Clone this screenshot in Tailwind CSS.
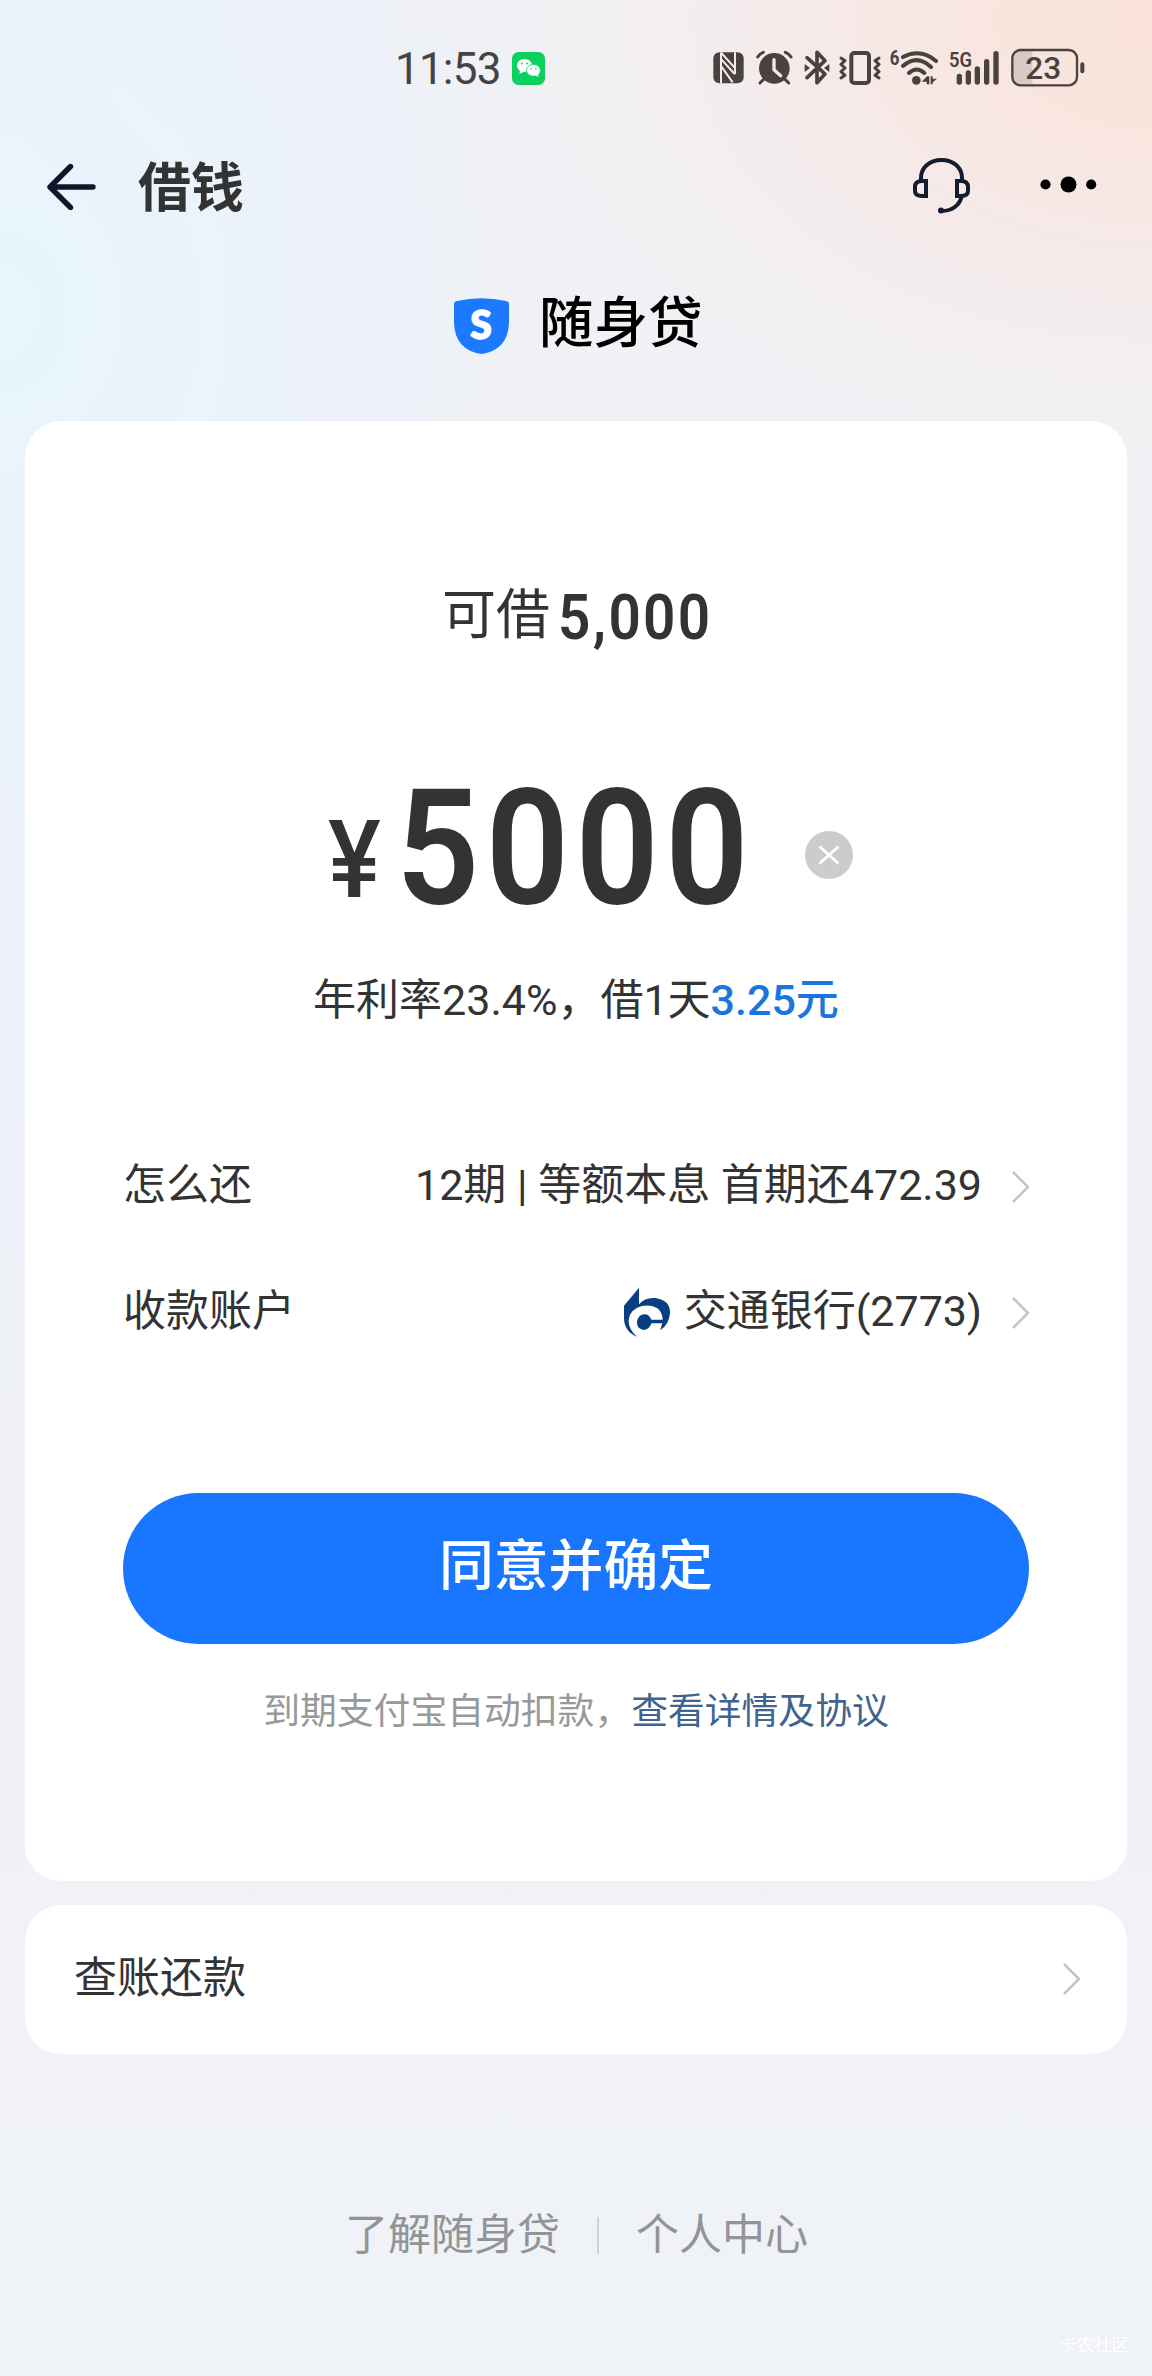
<!DOCTYPE html>
<html lang="zh-CN">
<head>
<meta charset="utf-8">
<title>借钱</title>
<script src="https://cdn.jsdelivr.net/npm/@tailwindcss/browser@4"></script>
</head>
<body class="bg-[#eff2f6]">
<div class="relative flex h-[2376px] w-[1152px] flex-col overflow-hidden bg-[radial-gradient(ellipse_660px_460px_at_1152px_20px,#f9e2d9_0%,#f8e6e0_30%,#f6e9e8b0_60%,#f4ecec40_85%,#f4ecec00_100%),radial-gradient(ellipse_420px_480px_at_0px_310px,#e8f5fd_0%,#e9f4fdb0_35%,#ebf2fb50_70%,#ebf2fb00_100%),radial-gradient(ellipse_560px_1100px_at_0px_300px,#eaf3fc_0%,#ebf2fb90_60%,#eff1f600_100%),linear-gradient(to_bottom,#f1f1f5_0px,#eff1f6_1000px,#eff2f6_2376px)] font-[Roboto,'Noto_Sans_CJK_SC',sans-serif] text-[#333]">

  <!-- status bar -->
  <div class="flex h-[134px] shrink-0 items-center pr-[67px] pl-[395px]">
    <span class="w-[117px] pt-[4px] text-[44px] leading-[44px] tracking-[-0.8px] text-[#444]">11:53</span>
    <svg class="mt-[3px] h-[33px] w-[33px]" viewBox="0 0 33 33"><rect width="33" height="33" rx="6.5" fill="#0bd15f"/><g fill="#fff"><ellipse cx="12.5" cy="13.5" rx="7.5" ry="6.6"/><path d="M8 18l-.5 4 4-2z"/><ellipse cx="21.5" cy="18.3" rx="7" ry="6" stroke="#0bd15f" stroke-width=".8"/><path d="M23 23l3.5 2-.5-3.500z"/></g><g fill="#0bd15f"><circle cx="10" cy="11.500" r=".9"/><circle cx="15" cy="11.500" r=".9"/><circle cx="19.200" cy="16.800" r=".8"/><circle cx="23.800" cy="16.800" r=".8"/></g></svg>
    <div class="ml-auto flex items-center text-[#4a423f]">
      <svg class="h-[40px] w-[31px]" viewBox="42 50 93 120"><rect x="43" y="66" width="91" height="93" rx="18" fill="currentColor"/><path d="M66 66v93M67 68l40 44M67 87l40 44M67 108l34 48M108 66v66" fill="none" stroke="#f3eaeb" stroke-width="6"/></svg>
      <svg class="ml-[12px] h-[40px] w-[37px]" viewBox="170 50 111 120"><circle cx="225" cy="114" r="46" fill="currentColor"/><path d="M175 80q6-10 17-14M275 80q-6-10-17-14M192 148l-10 10M258 148l10 10" fill="none" stroke="currentColor" stroke-width="9" stroke-linecap="round"/><path d="M224 88v30l20 18" fill="none" stroke="#f4eaea" stroke-width="10" stroke-linecap="round" stroke-linejoin="round"/></svg>
      <svg class="ml-[11px] h-[40px] w-[26px]" viewBox="311 50 78 120"><path d="M320 82l54 49-24 26V66l24 25-54 51" fill="none" stroke="currentColor" stroke-width="11" stroke-linejoin="round" stroke-linecap="round"/><path d="M313 101l16 12-16 12zM387 101l-16 12 16 12z" fill="currentColor"/></svg>
      <svg class="ml-[9px] h-[40px] w-[42px]" viewBox="417 50 126 120"><rect x="454" y="68" width="53" height="90" rx="9" fill="none" stroke="currentColor" stroke-width="12"/><path d="M423 83l12 8-12 11 12 11-12 11 12 11-12 8M537 83l-12 8 12 11-12 11 12 11-12 11 12 8" fill="none" stroke="currentColor" stroke-width="9" stroke-linejoin="round" stroke-linecap="round"/></svg>
      <svg class="ml-[9px] h-[40px] w-[49px]" viewBox="572 50 147 120"><text x="571" y="105" font-size="60" font-weight="700" font-family="Roboto" fill="currentColor" textLength="29" lengthAdjust="spacingAndGlyphs">6</text><path d="M611 80q52-27 99 12M611 107q42-37 84 3M629 128q23-21 46 0" fill="none" stroke="currentColor" stroke-width="12" stroke-linecap="round"/><circle cx="651" cy="150" r="13" fill="currentColor"/><path d="M682 138v24h8v-24zM683 138l-16 16h16zM694 138v24h6v-24zM697 159l16-14h-16z" fill="currentColor"/></svg>
      <svg class="ml-[10px] h-[40px] w-[51px]" viewBox="747 50 153 120"><text x="747" y="109" font-size="62" font-weight="600" font-family="Roboto" fill="currentColor" textLength="69" lengthAdjust="spacingAndGlyphs">5G</text><path d="M778 138v17M805 128v27M832 116v39M860 94v61M888 70v85" stroke="currentColor" stroke-width="16" stroke-linecap="round"/></svg>
      <svg class="ml-[11px] h-[40px] w-[74px]" viewBox="932 50 222 120"><path d="M957 60h39v104h-39q-21 0-21-21V81q0-21 21-21z" fill="#d9c9c6"/><rect x="936" y="59" width="194" height="106" rx="25" fill="none" stroke="currentColor" stroke-width="7"/><rect x="1140" y="96" width="12" height="33" rx="6" fill="currentColor"/><text x="975" y="147" font-size="96" font-weight="500" font-family="Roboto" fill="currentColor" textLength="108" lengthAdjust="spacingAndGlyphs">23</text></svg>
    </div>
  </div>

  <!-- navigation -->
  <div class="flex h-[104px] shrink-0 items-center pr-[54px] pl-[45px]">
    <svg class="h-[48px] w-[52px]" viewBox="0 0 52 48" fill="none" stroke="#11162b" stroke-width="5.400" stroke-linecap="round" stroke-linejoin="round"><path d="M25.500 4.500L5 25l20.500 20.500M6 25h42"/></svg>
    <h1 class="mt-[6px] ml-[41px] text-[53px] leading-[64px] font-bold">借钱</h1>
    <svg class="ml-auto h-[60px] w-[60px]" viewBox="0 0 60 60" fill="none" stroke="#161c30" stroke-width="4"><path d="M10 24v-2C10 12 18 4 30.500 4S51 12 51 22v2M50.500 41c-2 8-9 14-20 14"/><path d="M15 25H11q-7 0-7 6v4q0 5 7 5h4zM46 25h4q7 0 7 6v4q0 5-7 5h-4z"/><circle cx="30" cy="54.500" r="3" fill="#161c30" stroke="none"/></svg>
    <svg class="ml-[69px] h-[20px] w-[58px]" viewBox="0 0 58 20"><circle cx="5.500" cy="8.500" r="5.100"/><circle cx="28.500" cy="8.500" r="8"/><circle cx="51.200" cy="8.500" r="5.100"/></svg>
  </div>

  <!-- product name -->
  <div class="flex h-[183px] shrink-0 items-center pl-[453px]">
    <svg class="mb-[8px] h-[56px] w-[57px]" viewBox="0 0 57 56"><path d="M1 6Q1 3.500 4 3Q28-2.500 53 3Q56 3.500 56 6V25Q55 52 28.500 56Q2 52 1 25z" fill="#1b7aff"/><text x="28" y="41" text-anchor="middle" font-family="Lato" font-weight="900" font-size="39" fill="#fff" stroke="#fff" stroke-width="1.500">S</text></svg>
    <div class="mb-[13px] ml-[29px] text-[54.500px] leading-[60px] font-medium text-black">随身贷</div>
  </div>

  <!-- loan card -->
  <section class="mx-[25px] flex h-[1460px] shrink-0 flex-col rounded-[36px] bg-white px-[98px]">
    <div class="mt-[163px] flex h-[64px] items-center pl-[319px]">
      <span class="text-[54px] leading-[64px]">可借</span>
      <span class="mt-[3px] ml-[8px] origin-left scale-x-[0.900] text-[63px] leading-[64px] font-semibold tracking-[2.600px]">5,000</span>
    </div>
    <div class="mt-[120px] flex h-[160px] items-center pl-[205px]">
      <span class="mt-[23px] origin-left scale-x-[0.920] text-[108px] leading-[160px] font-medium">¥</span>
      <span class="ml-[11px] w-[380px] origin-left scale-x-[0.900] text-[162px] leading-[160px] font-semibold tracking-[7.200px]">5000</span>
      <svg class="ml-auto mr-[176px] mt-[13px] h-[48px] w-[48px] shrink-0" viewBox="0 0 48 48"><circle cx="24" cy="24" r="24" fill="#ccc"/><path d="M14.500 15.500l19 17M33.500 15.500l-19 17" stroke="#fff" stroke-width="3"/></svg>
    </div>
    <div class="mt-[40px] flex h-[64px] items-center justify-center text-[43px] leading-[64px]"><span>年利率23.4%，借1天</span><span class="font-medium text-[#1c75dc]">3.25元</span></div>

    <div class="mt-[90px] flex h-[126px] items-center text-[43px] leading-[60px]">
      <span>怎么还</span>
      <span class="ml-auto">12期 | 等额本息 首期还472.39</span>
      <svg class="mt-[4px] ml-[30px] h-[34px] w-[17px]" viewBox="0 0 17 34" fill="none" stroke="#c4c4c4" stroke-width="2.500"><path d="M1 2l15 15L1 32"/></svg>
    </div>
    <div class="flex h-[126px] items-center text-[43px] leading-[60px]">
      <span>收款账户</span>
      <svg class="mt-[2px] ml-auto h-[50px] w-[46px]" viewBox="532 472 107 150" preserveAspectRatio="none"><path d="M532 528L567 474V524Q580 503 605 505Q640 512 639 550Q637 585 616 602L621 581H596Q590 601 578 601Q562 598 562 578Q564 555 580 554Q590 554 596 570H622Q620 530 590 528Q560 526 546 555Q535 590 562 621Q532 605 532 565z" fill="#083f80"/></svg>
      <span class="ml-[14px]">交通银行(2773)</span>
      <svg class="mt-[4px] ml-[30px] h-[34px] w-[17px]" viewBox="0 0 17 34" fill="none" stroke="#c4c4c4" stroke-width="2.500"><path d="M1 2l15 15L1 32"/></svg>
    </div>

    <button class="mt-[119px] flex h-[151px] w-[906px] items-center justify-center rounded-full bg-[#1977ff] pb-[6px] text-[54.800px] leading-[64px] font-medium text-white">同意并确定</button>
    <p class="mt-[40px] text-center text-[36.800px] leading-[56px] whitespace-nowrap text-[#999]">到期支付宝自动扣款，<a class="text-[#41648f]">查看详情及协议</a></p>
  </section>

  <!-- bills and repayment -->
  <section class="mx-[25px] mt-[24px] flex h-[149px] shrink-0 items-center rounded-[36px] bg-white pr-[46px] pl-[49px]">
    <span class="pb-[4px] text-[43px] leading-[60px]">查账还款</span>
    <svg class="mb-[2px] ml-auto h-[34px] w-[18px]" viewBox="0 0 18 34" fill="none" stroke="#c4c4c4" stroke-width="2.500"><path d="M1 2l15 15L1 32"/></svg>
  </section>

  <!-- footer links -->
  <footer class="mt-[151px] flex h-[60px] shrink-0 items-center pl-[345px] text-[43px] leading-[60px] text-[#939498]">
    <span>了解随身贷</span>
    <span class="ml-[37px] h-[37px] w-[2px] bg-[#d0d2d6]"></span>
    <span class="ml-[37px]">个人中心</span>
  </footer>
  <div class="mt-auto mr-[23px] mb-[18px] self-end text-[17.500px] leading-[26px] text-white">卡农社区</div>
</div>
</body>
</html>
